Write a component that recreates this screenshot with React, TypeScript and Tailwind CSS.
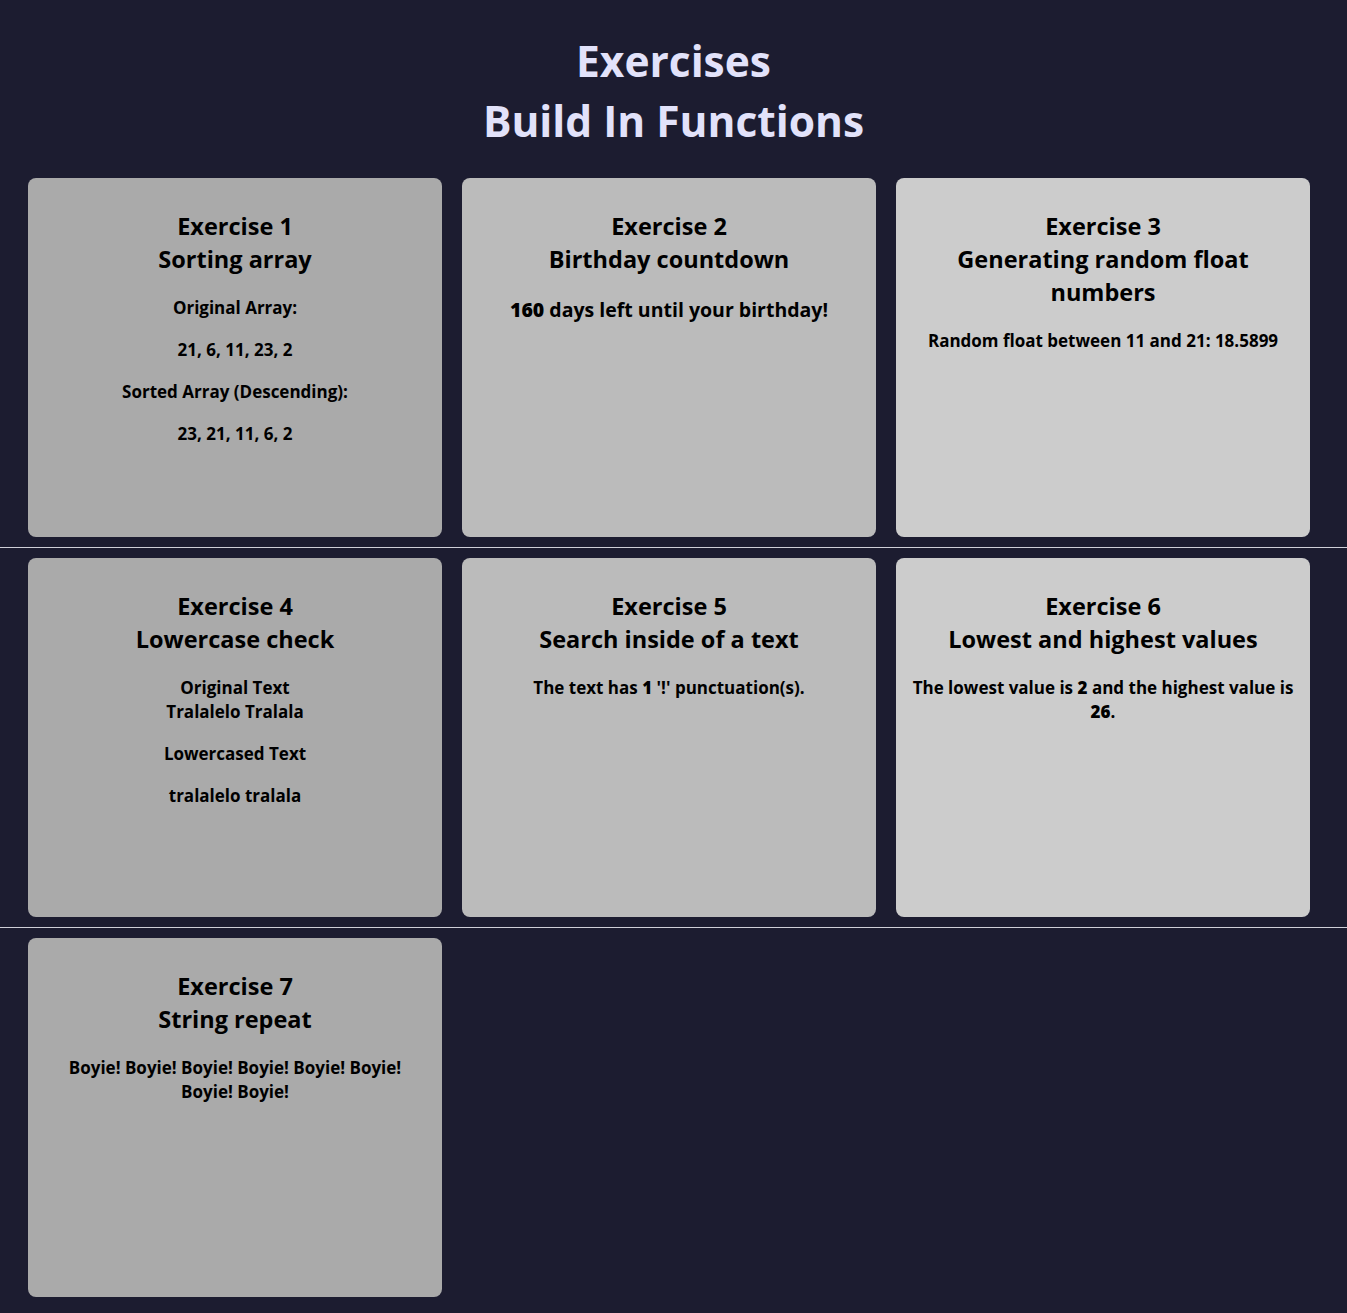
const cardBg = ["bg-[#aaaaaa]", "bg-[#bbbbbb]", "bg-[#cccccc]"];

function Card({
  col,
  number,
  title,
  children,
}: {
  col: number;
  number: number;
  title: React.ReactNode;
  children: React.ReactNode;
}) {
  return (
    <div
      className={`${cardBg[col]} w-[414px] h-[359px] shrink-0 rounded-lg px-4 pt-[32px] text-center text-black`}
    >
      <h2 className="text-[23.5px] leading-[33px] font-bold mb-[20px]">
        Exercise {number}
        <br />
        {title}
      </h2>
      <div className="text-[17px] leading-[24px] font-bold flex flex-col gap-[18px]">
        {children}
      </div>
    </div>
  );
}

function Row({ children, last }: { children: React.ReactNode; last?: boolean }) {
  return (
    <>
      <div className="flex gap-5 pl-[28px] py-[10px]">{children}</div>
      {!last && <div className="h-px bg-[#cfcfd8]" />}
    </>
  );
}

export default function App() {
  return (
    <div className="min-h-screen bg-[#1c1c30] font-['Segoe_UI','Open_Sans',sans-serif] pb-[4px]">
      <h1 className="text-center text-[42.5px] leading-[60px] font-bold text-[#e2e2fa] pt-[31px] pb-[17px]">
        Exercises
        <br />
        Build In Functions
      </h1>

      <Row>
        <Card col={0} number={1} title="Sorting array">
          <p>Original Array:</p>
          <p>21, 6, 11, 23, 2</p>
          <p>Sorted Array (Descending):</p>
          <p>23, 21, 11, 6, 2</p>
        </Card>
        <Card col={1} number={2} title="Birthday countdown">
          <p className="text-[19.5px] leading-[26px] mt-[1px]">
            <strong className="font-extrabold">160</strong> days left until your birthday!
          </p>
        </Card>
        <Card col={2} number={3} title={<>Generating random float<br />numbers</>}>
          <p>Random float between 11 and 21: 18.5899</p>
        </Card>
      </Row>

      <Row>
        <Card col={0} number={4} title="Lowercase check">
          <p>
            Original Text
            <br />
            Tralalelo Tralala
          </p>
          <p>Lowercased Text</p>
          <p>tralalelo tralala</p>
        </Card>
        <Card col={1} number={5} title="Search inside of a text">
          <p>
            The text has <strong className="font-extrabold">1</strong> '!' punctuation(s).
          </p>
        </Card>
        <Card col={2} number={6} title="Lowest and highest values">
          <p>
            The lowest value is <strong className="font-extrabold">2</strong> and the highest value is
            <br />
            <strong className="font-extrabold">26</strong>.
          </p>
        </Card>
      </Row>

      <Row last>
        <Card col={0} number={7} title="String repeat">
          <p>
            Boyie! Boyie! Boyie! Boyie! Boyie! Boyie!
            <br />
            Boyie! Boyie!
          </p>
        </Card>
      </Row>
    </div>
  );
}
